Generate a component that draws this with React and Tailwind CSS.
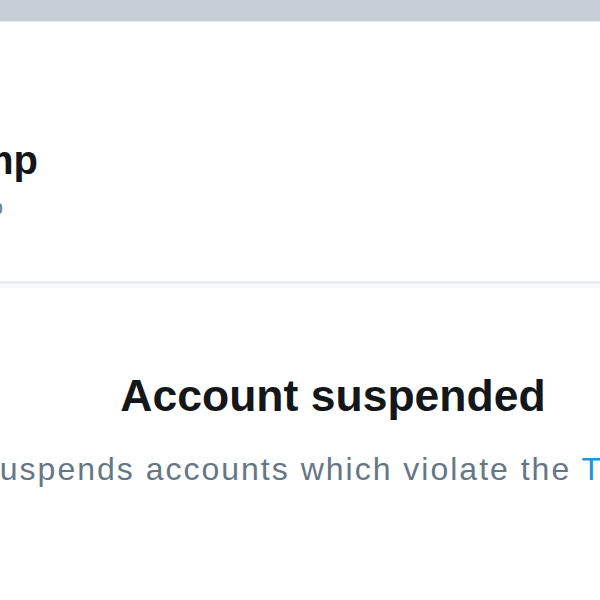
export default function App() {
  return (
    <div className="w-[600px] h-[600px] overflow-hidden bg-white font-['Liberation_Sans',Arial,sans-serif]">
      {/* Banner strip */}
      <div className="h-[22px] bg-[#c5ced6] border-b border-[#e6ecf0]" />

      {/* Profile header */}
      <div className="pt-[118px] pb-[64px]">
        <div className="w-[38px] flex justify-end">
          <h1 className="shrink-0 whitespace-nowrap text-[40px] leading-none font-bold text-[#14171a]">
            Donald J. Trump
          </h1>
        </div>
        <div className="mt-[17px] w-[3px] flex justify-end">
          <span className="shrink-0 whitespace-nowrap text-[20px] leading-none text-[#657786]">
            @realDonaldTrump
          </span>
        </div>
      </div>

      <div className="h-[3px] bg-[#e6ecf0]" />
      <div className="h-[4px] bg-[#f7f8f9]" />

      {/* Suspended notice */}
      <div className="w-[666px] pt-[86px] flex flex-col items-center">
        <h2 className="whitespace-nowrap text-[44.5px] leading-none font-bold text-[#14171a]">
          Account suspended
        </h2>
        <p className="mt-[34px] whitespace-nowrap text-[32px] leading-none tracking-[2px] text-[#657786]">
          Twitter suspends accounts which violate the{' '}
          <a className="text-[#1b95e0]">Twitter Rules</a>.
        </p>
      </div>
    </div>
  )
}
